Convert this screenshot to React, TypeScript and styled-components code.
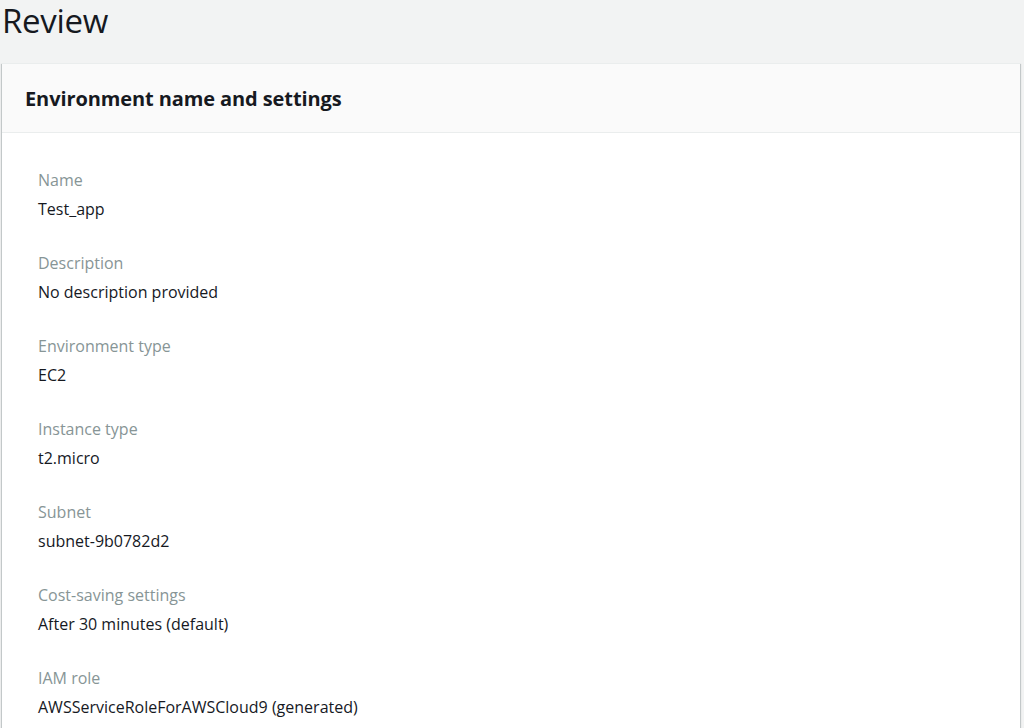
import React from 'react';
import styled, { createGlobalStyle } from 'styled-components';

const GlobalStyle = createGlobalStyle`
    html, body {
        margin: 0;
        padding: 0;
        background: #f2f3f3;
        font-family: "Open Sans", "Noto Sans", Arial, sans-serif;
        color: #16191f;
    }
`;

const Page = styled.div`
    padding: 0 4px 0 2px;
`;

const Title = styled.h1`
    margin: 0;
    height: 63px;
    padding-top: 1px;
    box-sizing: border-box;
    font-size: 33px;
    font-weight: 400;
    line-height: 40px;
    letter-spacing: -0.3px;
`;

const Panel = styled.section`
    background: #ffffff;
    box-shadow: 0 1px 1px 0 rgba(0, 28, 36, 0.3), 1px 1px 1px 0 rgba(0, 28, 36, 0.15), -1px 1px 1px 0 rgba(0, 28, 36, 0.15);
    border-top: 1px solid #eaeded;
`;

const PanelHeader = styled.header`
    background: #fafafa;
    border-bottom: 1px solid #eaeded;
    height: 69px;
    box-sizing: border-box;
    display: flex;
    align-items: center;
    padding: 0 23px;
`;

const PanelTitle = styled.h2`
    margin: 0;
    font-size: 20px;
    font-weight: 700;
    letter-spacing: -0.1px;
`;

const PanelBody = styled.div`
    padding: 36px 36px 20px;
    display: flex;
    flex-direction: column;
    gap: 32px;
`;

const Field = styled.div`
    display: flex;
    flex-direction: column;
    gap: 7px;
`;

const Label = styled.div`
    color: #879596;
    font-size: 16px;
    line-height: 22px;
`;

const Value = styled.div`
    color: #16191f;
    font-size: 16px;
    line-height: 22px;
`;

const fields = [
    { label: 'Name', value: 'Test_app' },
    { label: 'Description', value: 'No description provided' },
    { label: 'Environment type', value: 'EC2' },
    { label: 'Instance type', value: 't2.micro' },
    { label: 'Subnet', value: 'subnet-9b0782d2' },
    { label: 'Cost-saving settings', value: 'After 30 minutes (default)' },
    { label: 'IAM role', value: 'AWSServiceRoleForAWSCloud9 (generated)' },
];

const App = () => {
    return <Page>
        <GlobalStyle />
        <Title>Review</Title>
        <Panel>
            <PanelHeader>
                <PanelTitle>Environment name and settings</PanelTitle>
            </PanelHeader>
            <PanelBody>
                {fields.map(field => {
                    return <Field key={field.label}>
                        <Label>{field.label}</Label>
                        <Value>{field.value}</Value>
                    </Field>
                })}
            </PanelBody>
        </Panel>
    </Page>
}

export default App;
